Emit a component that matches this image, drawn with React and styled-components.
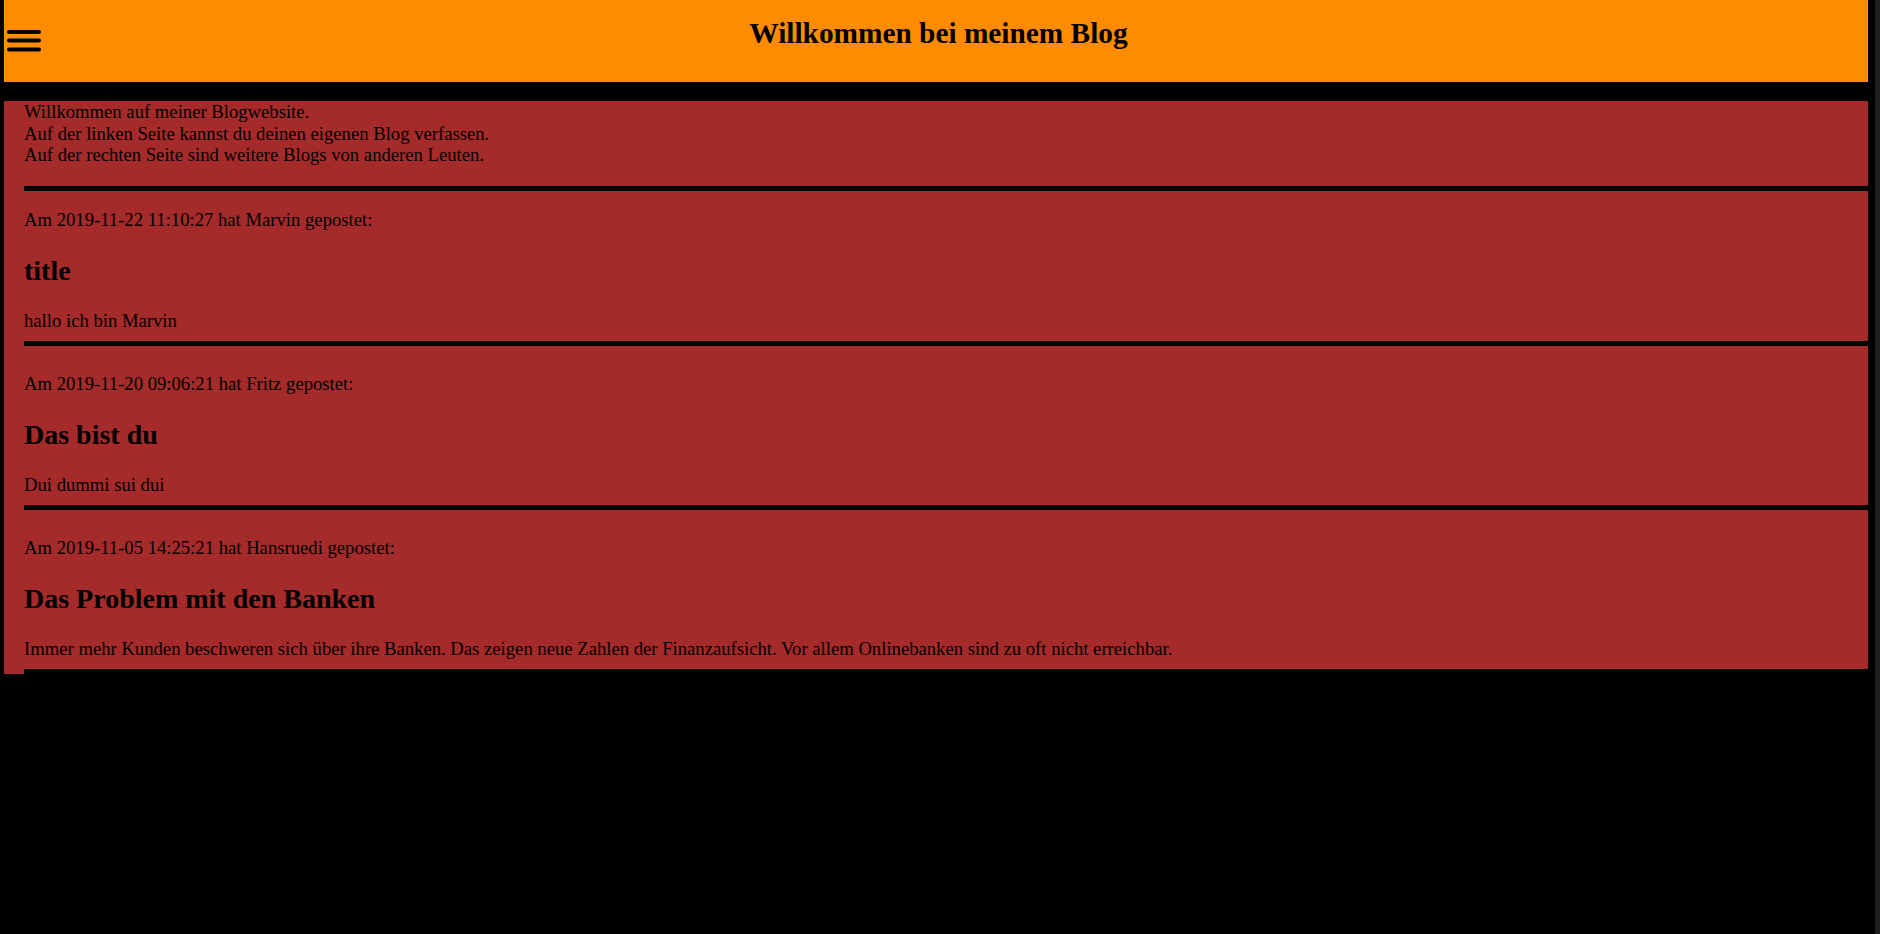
import React from "react";
import styled, { createGlobalStyle } from "styled-components";

const GlobalStyle = createGlobalStyle`
  html, body {
    margin: 0;
    padding: 0;
    background: #000;
  }
  body {
    font-family: "Liberation Serif", "Times New Roman", serif;
    font-size: 18.67px;
    color: #000;
  }
`;

const Page = styled.div`
  min-height: 100vh;
  box-sizing: border-box;
  padding: 0 7px 0 4px;
  border-right: 5px solid #1d1f22;
`;

const Header = styled.header`
  height: 82px;
  background: #ff8c00;
  display: grid;
  grid-template-columns: 1fr auto 1fr;
`;

const MenuButton = styled.button`
  justify-self: start;
  align-self: center;
  margin: 1px 0 0 3px;
  padding: 0;
  border: 0;
  background: none;
  width: 34px;
  height: 23px;
  display: block;
  cursor: pointer;
`;

const Title = styled.h1`
  margin: 16px 0 0;
  padding-left: 5px;
  font-size: 29.33px;
  line-height: 34px;
  font-weight: bold;
  white-space: nowrap;
`;

const Content = styled.main`
  margin-top: 19px;
  background: #a52a2a;
  padding-left: 20px;
`;

const Intro = styled.p`
  margin: 0 0 20.5px;
  line-height: 21.5px;
`;

const Rule = styled.hr`
  margin: 0;
  border: 0;
  height: 5px;
  background: #000;
`;

const Post = styled.article`
  padding-top: ${(p) => (p.$first ? 18 : 27)}px;
  padding-bottom: 9.5px;
`;

const Meta = styled.p`
  margin: 0 0 24px;
  line-height: 21.5px;
`;

const PostTitle = styled.h2`
  margin: 0 0 23.5px;
  font-size: 28px;
  line-height: 32px;
  font-weight: bold;
`;

const Body = styled.p`
  margin: 0;
  line-height: 21.5px;
`;

const posts = [
  {
    date: "2019-11-22 11:10:27",
    author: "Marvin",
    title: "title",
    body: "hallo ich bin Marvin",
  },
  {
    date: "2019-11-20 09:06:21",
    author: "Fritz",
    title: "Das bist du",
    body: "Dui dummi sui dui",
  },
  {
    date: "2019-11-05 14:25:21",
    author: "Hansruedi",
    title: "Das Problem mit den Banken",
    body:
      "Immer mehr Kunden beschweren sich über ihre Banken. Das zeigen neue Zahlen der Finanzaufsicht. Vor allem Onlinebanken sind zu oft nicht erreichbar.",
  },
];

function MenuIcon() {
  return (
    <svg width="34" height="23" viewBox="0 0 34 23" aria-hidden="true">
      <g stroke="#000" strokeWidth="4" strokeLinecap="round">
        <line x1="2" y1="2" x2="32" y2="2" />
        <line x1="2" y1="10.5" x2="32" y2="10.5" />
        <line x1="2" y1="19.5" x2="32" y2="19.5" />
      </g>
    </svg>
  );
}

export default function App() {
  return (
    <>
      <GlobalStyle />
      <Page>
        <Header>
          <MenuButton aria-label="Menü">
            <MenuIcon />
          </MenuButton>
          <Title>Willkommen bei meinem Blog</Title>
        </Header>
        <Content>
          <Intro>
            Willkommen auf meiner Blogwebsite.
            <br />
            Auf der linken Seite kannst du deinen eigenen Blog verfassen.
            <br />
            Auf der rechten Seite sind weitere Blogs von anderen Leuten.
          </Intro>
          <Rule />
          {posts.map((post, i) => (
            <React.Fragment key={post.date}>
              <Post $first={i === 0}>
                <Meta>
                  Am {post.date} hat {post.author} gepostet:
                </Meta>
                <PostTitle>{post.title}</PostTitle>
                <Body>{post.body}</Body>
              </Post>
              <Rule />
            </React.Fragment>
          ))}
        </Content>
      </Page>
    </>
  );
}
